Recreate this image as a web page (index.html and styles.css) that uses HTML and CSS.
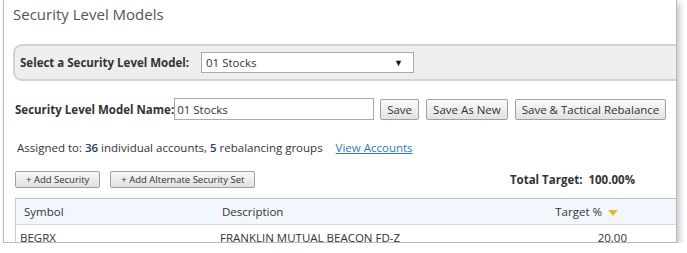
FILE: index.html
```html
<!DOCTYPE html>
<html lang="en">
<head>
    <meta charset="UTF-8">
    <title>Security Level Models</title>
    <link rel="stylesheet" href="styles.css">
</head>
<body>
    <div class="frame">
        <h1 class="title">Security Level Models</h1>

        <div class="select-panel">
            <label class="select-label">Select a Security Level Model:</label>
            <div class="select-box">
                <span>01 Stocks</span>
                <span class="arrow">&#9660;</span>
            </div>
        </div>

        <div class="name-row">
            <label class="name-label">Security Level Model Name:</label>
            <input class="name-input" type="text" value="01 Stocks">
            <button class="btn">Save</button>
            <button class="btn">Save As New</button>
            <button class="btn">Save &amp; Tactical Rebalance</button>
        </div>

        <div class="assigned">
            Assigned to: <b>36</b> individual accounts, <b>5</b> rebalancing groups
            <a href="#" class="link">View Accounts</a>
        </div>

        <div class="tool-row">
            <button class="btn-small">+ Add Security</button>
            <button class="btn-small">+ Add Alternate Security Set</button>
            <div class="total">Total Target:&nbsp; 100.00%</div>
        </div>

        <div class="grid">
            <div class="grid-head">
                <div class="col-symbol">Symbol</div>
                <div class="col-desc">Description</div>
                <div class="col-target">Target % <span class="sort"></span></div>
                <div class="col-rest"></div>
            </div>
            <div class="grid-row">
                <div class="col-symbol">BEGRX</div>
                <div class="col-desc">FRANKLIN MUTUAL BEACON FD-Z</div>
                <div class="col-target">20.00</div>
                <div class="col-rest"></div>
            </div>
        </div>
    </div>
</body>
</html>
```

FILE: styles.css
```css
body {
    margin: 0;
    background-color: #fff;
    font-family: "Open Sans", "Noto Sans", sans-serif;
    color: #333;
    white-space: nowrap;
}
.frame {
    box-sizing: border-box;
    margin-left: 3px;
    width: 674px;
    height: 243px;
    border: 1px solid #b9b9b9;
    border-top: none;
    box-shadow: 3px 3px 6px rgba(0, 0, 0, 0.22);
    overflow: hidden;
    padding-left: 9px;
}
.title {
    margin: 0;
    padding-top: 3px;
    font-size: 15px;
    line-height: 22px;
    font-weight: normal;
    color: #555;
}
.select-panel {
    display: flex;
    align-items: center;
    width: 720px;
    height: 33px;
    margin-top: 19px;
    border: 2px solid #d2d2d2;
    border-right: none;
    border-radius: 9px 0 0 9px;
    background-color: #eee;
}
.select-label {
    font-size: 11.5px;
    font-weight: bold;
    margin-left: 5px;
    width: 181px;
}
.select-box {
    box-sizing: border-box;
    display: flex;
    justify-content: space-between;
    align-items: center;
    width: 213px;
    height: 21px;
    padding: 0 10px 0 4px;
    border: 1px solid #a9a9a9;
    background-color: #fff;
    font-size: 11.5px;
}
.arrow {
    font-size: 9px;
    color: #111;
}
.name-row {
    display: flex;
    align-items: center;
    margin-top: 17px;
    margin-left: 2px;
}
.name-label {
    font-size: 11.5px;
    font-weight: bold;
}
.name-input {
    box-sizing: border-box;
    width: 200px;
    height: 22px;
    margin: 0 6px 0 0;
    padding: 0 2px;
    border: 1px solid #aaa;
    font-family: inherit;
    font-size: 11.5px;
    color: #333;
}
.btn {
    height: 21px;
    margin-right: 7px;
    padding: 0 6px;
    border: 1px solid #a0a0a0;
    border-radius: 2px;
    background: linear-gradient(#fafafa, #e2e2e2);
    font-family: inherit;
    font-size: 11.5px;
    color: #333;
}
.assigned {
    margin-top: 18px;
    margin-left: 4px;
    font-size: 11.5px;
    line-height: 20px;
}
.assigned b {
    font-weight: 600;
    color: #23405e;
}
.link {
    margin-left: 10px;
    color: #2d7bbf;
}
.tool-row {
    display: flex;
    align-items: center;
    margin-top: 13px;
    margin-left: 2px;
}
.btn-small {
    height: 17px;
    margin-right: 10px;
    padding: 0 10px;
    border: 1px solid #a0a0a0;
    border-radius: 2px;
    background: linear-gradient(#f8f8f8, #e0e0e0);
    font-family: inherit;
    font-size: 9.5px;
    color: #333;
}
.total {
    margin-left: auto;
    margin-right: 41px;
    font-size: 11.5px;
    font-weight: bold;
}
.grid {
    width: 720px;
    margin-top: 10px;
    margin-left: 2px;
    border-left: 1px solid #ccc;
    border-top: 1px solid #b4c7d8;
    font-size: 11.5px;
}
.grid-head, .grid-row {
    display: flex;
    align-items: center;
}
.grid-head {
    height: 25px;
    background-color: #f1f7fc;
    border-bottom: 1px solid #d6d6d6;
}
.grid-row {
    height: 24px;
}
.col-symbol {
    width: 198px;
    padding-left: 8px;
}
.col-desc {
    width: 320px;
}
.col-target {
    width: 76px;
    text-align: right;
}
.grid-row .col-symbol {
    padding-left: 4px;
}
.grid-row .col-desc {
    margin-left: 2px;
}
.grid-row .col-target {
    width: 87px;
}
.sort {
    display: inline-block;
    width: 0;
    height: 0;
    margin-left: 3px;
    border-left: 5px solid transparent;
    border-right: 5px solid transparent;
    border-top: 6px solid #e8b930;
    vertical-align: middle;
}
.col-rest {
    flex: 1;
}
```
